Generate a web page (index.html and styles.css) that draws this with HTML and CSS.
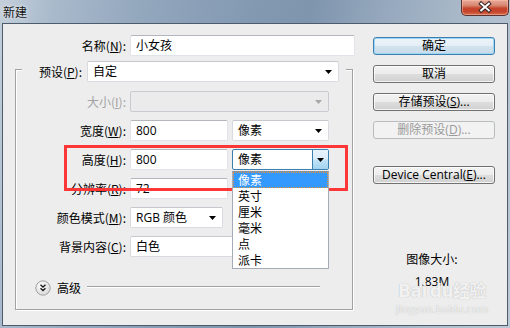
FILE: index.html
```html
<!DOCTYPE html>
<html lang="zh-CN">
<head>
<meta charset="utf-8">
<title>新建</title>
<link rel="stylesheet" href="styles.css">
</head>
<body>
<div class="win">
  <div class="titlebar">
    <span class="title">新建</span>
    <div class="close">
      <svg width="48" height="16" viewBox="0 0 48 16">
        <path d="M20 3.5 L28 10.5 M28 3.5 L20 10.5" stroke="#3b2a2a" stroke-width="4.2" stroke-linecap="square" fill="none"/>
        <path d="M20 3.5 L28 10.5 M28 3.5 L20 10.5" stroke="#ffffff" stroke-width="2" stroke-linecap="square" fill="none"/>
      </svg>
    </div>
  </div>
  <div class="client">
    <div class="form">
      <div class="name-row">
        <span class="lbl name-lbl">名称(<u>N</u>):</span>
        <div class="field w-name">小女孩</div>
      </div>
      <div class="group">
        <div class="group-head">
          <span class="lbl head-lbl">预设(<u>P</u>):</span>
          <div class="combo w-preset"><span class="val">自定</span><svg class="arrow" width="7" height="4" viewBox="0 0 7 4"><polygon points="0,0 7,0 3.5,4" fill="#000"/></svg></div>
        </div>
        <div class="rows">
          <div class="row">
            <span class="lbl disabled">大小(<u>I</u>):</span>
            <div class="combo combo-disabled w-size"><span class="val"></span><svg class="arrow" width="7" height="4" viewBox="0 0 7 4"><polygon points="0,0 7,0 3.5,4" fill="#a7a7a7"/></svg></div>
          </div>
          <div class="row">
            <span class="lbl">宽度(<u>W</u>):</span>
            <div class="field w-num">800</div>
            <div class="combo w-unit"><span class="val">像素</span><svg class="arrow" width="7" height="4" viewBox="0 0 7 4"><polygon points="0,0 7,0 3.5,4" fill="#000"/></svg></div>
          </div>
          <div class="row">
            <span class="lbl">高度(<u>H</u>):</span>
            <div class="field w-num">800</div>
            <div class="combo combo-open w-unit">
              <span class="val">像素</span>
              <span class="drop-btn"><svg width="7" height="4" viewBox="0 0 7 4"><polygon points="0,0 7,0 3.5,4" fill="#000"/></svg></span>
              <ul class="list">
                <li class="item selected">像素</li>
                <li class="item">英寸</li>
                <li class="item">厘米</li>
                <li class="item">毫米</li>
                <li class="item">点</li>
                <li class="item">派卡</li>
              </ul>
            </div>
          </div>
          <div class="row">
            <span class="lbl">分辨率(<u>R</u>):</span>
            <div class="field w-num">72</div>
            <div class="combo w-unit"><span class="val"></span></div>
          </div>
          <div class="row">
            <span class="lbl">颜色模式(<u>M</u>):</span>
            <div class="combo w-mode"><span class="val">RGB 颜色</span><svg class="arrow" width="7" height="4" viewBox="0 0 7 4"><polygon points="0,0 7,0 3.5,4" fill="#000"/></svg></div>
          </div>
          <div class="row">
            <span class="lbl">背景内容(<u>C</u>):</span>
            <div class="combo w-bg"><span class="val">白色</span></div>
          </div>
        </div>
        <div class="advanced">
          <svg class="adv-icon" width="16" height="16" viewBox="0 0 16 16">
            <defs>
              <radialGradient id="g" cx="0.4" cy="0.35" r="0.7">
                <stop offset="0" stop-color="#ffffff"/>
                <stop offset="1" stop-color="#d6d6d6"/>
              </radialGradient>
            </defs>
            <circle cx="8" cy="8" r="7.2" fill="url(#g)" stroke="#a3a3a3" stroke-width="1"/>
            <path d="M5.5 4.8 L8 7 L10.5 4.8 M5.5 8.3 L8 10.5 L10.5 8.3" stroke="#1a1a1a" stroke-width="1.4" fill="none"/>
          </svg>
          <span class="adv-text">高级</span>
          <span class="adv-line"></span>
        </div>
      </div>
    </div>
    <div class="side">
      <div class="btn btn-default">确定</div>
      <div class="btn">取消</div>
      <div class="btn">存储预设(<u>S</u>)...</div>
      <div class="btn btn-disabled">删除预设(<u>D</u>)...</div>
      <div class="btn btn-device">Device Central(<u>E</u>)...</div>
      <div class="info">
        <span class="info-title">图像大小:</span>
        <span class="info-size">1.83M</span>
      </div>
    </div>
  </div>
  <div class="mark"></div>
  <div class="watermark">
    <span class="wm-logo">Bai<span class="wm-paw">du</span>经验</span>
    <span class="wm-url">jingyan.baidu.com</span>
  </div>
</div>
</body>
</html>
```

FILE: styles.css
```css
* {
  box-sizing: border-box;
  margin: 0;
  padding: 0;
}

html, body {
  width: 510px;
  height: 328px;
  overflow: hidden;
}

body {
  font-family: "Open Sans", "Noto Sans CJK SC", sans-serif;
  font-size: 12px;
  color: #000;
  background: linear-gradient(100deg, #c4cfda 0%, #a8b9cb 10%, #93a7bd 25%, #8399b2 45%, #7f95ae 55%, #95a8bd 68%, #aebdcc 85%, #bcc8d4 100%);
}

.win {
  position: relative;
  width: 510px;
  height: 328px;
  display: flex;
  flex-direction: column;
  padding: 0 2px 2px 2px;
}

/* ---------- title bar ---------- */
.titlebar {
  height: 23px;
  display: flex;
  align-items: flex-start;
}

.title {
  font-family: "Noto Sans CJK SC", sans-serif;
  font-size: 12px;
  line-height: 16px;
  margin: 4px 0 0 1px;
  color: #111;
  text-shadow: 0 0 5px rgba(235, 240, 245, 0.95), 0 0 2px rgba(235, 240, 245, 0.9);
}

.close {
  margin-left: auto;
  margin-right: -1px;
  width: 48px;
  height: 16px;
  border: 1px solid #5a3430;
  border-top: none;
  border-radius: 0 0 5px 5px;
  background: linear-gradient(#e9a996 0%, #d88a75 35%, #c7452c 55%, #c4432a 75%, #d66b4e 100%);
  box-shadow: inset 0 0 0 1px rgba(255, 200, 180, 0.45);
  display: flex;
}

/* ---------- client area ---------- */
.client {
  flex: 1;
  display: flex;
  border: 1px solid #4d5c6d;
  background: #ededed;
}

.form {
  width: 358px;
  padding: 11px 0 0 12px;
}

.lbl {
  text-align: right;
  line-height: 21px;
  white-space: nowrap;
  font-family: "Noto Sans CJK SC", sans-serif;
}

.lbl u, .btn u {
  text-decoration: underline;
  text-underline-offset: 1px;
}

.lbl.disabled {
  color: #a3a3a3;
}

.name-row {
  display: flex;
  height: 21px;
  gap: 4px;
}

.name-lbl {
  width: 111px;
}

.field, .combo {
  position: relative;
  height: 21px;
  background: #fff;
  border: 1px solid #e1e3ea;
  border-top-color: #b4b6bd;
  border-radius: 2px;
  line-height: 19px;
  padding-left: 5px;
  white-space: nowrap;
  font-family: "Open Sans", "Noto Sans CJK SC", sans-serif;
}

.combo {
  display: flex;
  align-items: center;
  border-color: #d9dbe0;
  border-top-color: #c6c8cd;
}

.combo .val {
  flex: 1;
}

.combo .arrow {
  margin-right: 6px;
  flex: none;
}

.w-name { width: 225px; }
.w-preset { width: 252px; }
.w-size { width: 199px; }
.w-num { width: 98px; }
.w-unit { width: 97px; }
.w-mode { width: 93px; }
.w-bg { width: 198px; }

.combo-disabled {
  background: #ebebeb;
  border-color: #c9cbd0;
}

/* ---------- group box ---------- */
.group {
  margin-top: 13px;
  width: 338px;
  border: 1px solid #a2a2a2;
  box-shadow: 1px 1px 0 #fff, inset 1px 1px 0 #fff;
  padding-bottom: 13px;
}

.group-head {
  display: flex;
  gap: 5px;
  margin: -9px 6px 0 6px;
  height: 21px;
  background: #ededed;
}

.head-lbl {
  width: 60px;
}

.rows {
  margin-top: 9px;
  display: flex;
  flex-direction: column;
  gap: 8px;
}

.row {
  display: flex;
  gap: 4px;
  height: 21px;
}

.row > .lbl {
  width: 110px;
}

/* open unit combo */
.combo-open {
  border-color: #3c7fb1;
  border-radius: 2px;
  padding-right: 0;
}

.drop-btn {
  width: 16px;
  height: 19px;
  border-left: 1px solid #3c7fb1;
  background: linear-gradient(#e8f4fc 0%, #dcedfb 45%, #bfe2f7 55%, #a4d3ef 100%);
  display: flex;
  align-items: center;
  justify-content: center;
}

.list {
  position: absolute;
  left: -1px;
  top: 21px;
  width: 97px;
  list-style: none;
  background: #fff;
  border: 1px solid #a6abb8;
  border-top: 1px solid #8a8f9c;
  z-index: 5;
  padding: 0;
}

.item {
  height: 16px;
  line-height: 16px;
  padding-left: 5px;
  font-family: "Noto Sans CJK SC", sans-serif;
}

.item.selected {
  background: #3399ff;
  color: #fff;
  outline: 1px dotted #e6903c;
  outline-offset: -1px;
}

/* ---------- advanced ---------- */
.advanced {
  margin-top: 23px;
  height: 16px;
  display: flex;
  align-items: center;
  padding-left: 19px;
}

.adv-icon {
  flex: none;
}

.adv-text {
  margin-left: 6px;
  font-family: "Noto Sans CJK SC", sans-serif;
  line-height: 16px;
}

.adv-line {
  margin-left: 6px;
  width: 233px;
  height: 2px;
  border-top: 1px solid #a2a2a2;
  border-bottom: 1px solid #fff;
  margin-top: -2px;
}

/* ---------- right column ---------- */
.side {
  width: 122px;
  margin-left: 12px;
  padding-top: 13px;
  display: flex;
  flex-direction: column;
  gap: 10px;
}

.btn {
  height: 18px;
  border: 1px solid #707070;
  border-radius: 3px;
  background: linear-gradient(#f3f3f3 0%, #ececec 48%, #dddddd 52%, #d0d0d0 100%);
  box-shadow: inset 0 0 0 1px rgba(255, 255, 255, 0.75);
  text-align: center;
  line-height: 16px;
  white-space: nowrap;
  font-family: "Open Sans", "Noto Sans CJK SC", sans-serif;
}

.btn-default {
  border-color: #3c7fb1;
  background: linear-gradient(#ecf4f9 0%, #e4eef5 48%, #d3e3ee 52%, #c7dbe9 100%);
  box-shadow: inset 0 0 0 1px #9fd6f5;
}

.btn-disabled {
  border-color: #b9bcbf;
  background: #f2f2f2;
  color: #9a9a9a;
  box-shadow: none;
}

.btn-device {
  margin-top: 17px;
}

.info {
  margin-top: 57px;
  display: flex;
  flex-direction: column;
  align-items: center;
  gap: 7px;
  padding-right: 4px;
  line-height: 16px;
}

.info-title {
  font-family: "Noto Sans CJK SC", sans-serif;
}

/* ---------- overlays ---------- */
.mark {
  position: absolute;
  left: 64px;
  top: 145px;
  width: 284px;
  height: 46px;
  border: 3px solid #fd3737;
  z-index: 3;
  pointer-events: none;
}

.watermark {
  position: absolute;
  left: 392px;
  top: 280px;
  width: 100px;
  display: flex;
  flex-direction: column;
  align-items: center;
  color: rgba(255, 255, 255, 0.85);
  text-shadow: 0 0 1px rgba(120, 120, 120, 0.6);
  z-index: 4;
}

.wm-logo {
  font-family: "DejaVu Sans", "Noto Sans CJK SC", sans-serif;
  font-weight: bold;
  font-size: 17px;
  line-height: 22px;
  letter-spacing: -0.5px;
}

.wm-paw {
  margin-left: 3px;
}

.wm-url {
  font-family: "DejaVu Sans", sans-serif;
  font-size: 10px;
  line-height: 12px;
  margin-top: 2px;
}
```
